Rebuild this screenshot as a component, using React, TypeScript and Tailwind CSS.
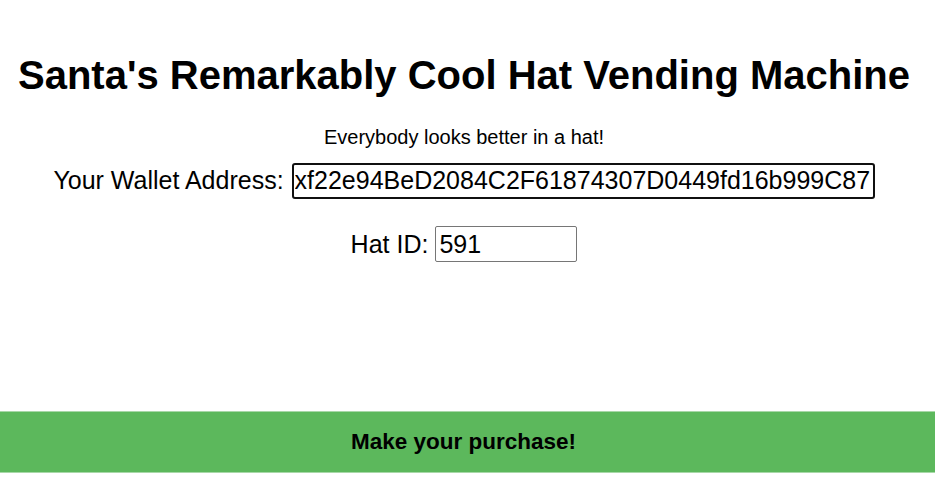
import React from "react";

export default function App() {
  return (
    <div className="w-[937px] h-[486px] bg-white text-black" style={{ fontFamily: '"Liberation Sans", Arial, sans-serif' }}>
      <div className="w-[928px] flex flex-col items-center pt-[52px]">
        <h1 className="text-[40px] font-bold leading-[46px]">Santa's Remarkably Cool Hat Vending Machine</h1>
        <p className="text-[20px] leading-[24px] mt-[27px]">Everybody looks better in a hat!</p>
        <div className="flex items-center mt-[13px] text-[25px]">
          <span>Your Wallet Address:</span>
          <input
            readOnly
            value="xf22e94BeD2084C2F61874307D0449fd16b999C87"
            className="ml-[8px] w-[583px] h-[36px] border-2 border-[#101010] rounded-[3px] px-[1px] text-[25px] outline-none"
            style={{ fontFamily: '"Liberation Sans", Arial, sans-serif' }}
          />
        </div>
        <div className="flex items-center mt-[26px] text-[25px]">
          <span>Hat ID:</span>
          <input
            readOnly
            value="591"
            className="ml-[7px] w-[142px] h-[36px] border border-[#767676] rounded-[2px] px-[3px] text-[25px] outline-none"
            style={{ fontFamily: '"Liberation Sans", Arial, sans-serif' }}
          />
        </div>
      </div>
      <button className="mt-[148px] w-[935px] h-[62px] pr-[8px] bg-[#5cb85c] border-y border-[#a8d8a8] text-[22.5px] font-bold text-black">
        Make your purchase!
      </button>
    </div>
  );
}
